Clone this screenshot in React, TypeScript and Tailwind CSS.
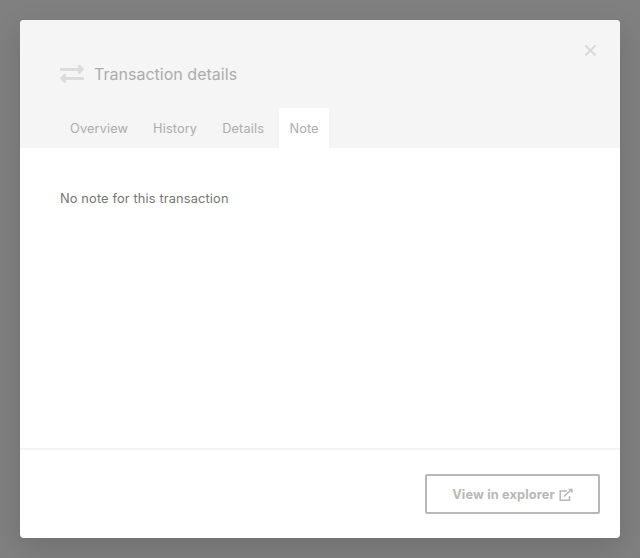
import React from "react";

const tabs = ["Overview", "History", "Details", "Note"];

function TransferIcon() {
  return (
    <svg className="h-6 w-6 shrink-0" viewBox="0 0 24 24" fill="#dcdcdc">
      <path d="M0 6h18V4c0-1.200 1.400-1.700 2.200-.9l3.500 3.600c.4.400.4 1 0 1.400l-3.500 3.600c-.8.800-2.200.300-2.200-.9V9H0z" />
      <path d="M24 15H6v-2c0-1.200-1.400-1.700-2.200-.9L.3 15.700c-.4.400-.4 1 0 1.400l3.500 3.600c.8.800 2.200.300 2.200-.9V18h18z" />
    </svg>
  );
}

export default function App() {
  return (
    <div className="h-[558px] w-[640px] bg-[#808080] p-5 font-['Inter',sans-serif] text-[12.8px] tracking-[0.15px]">
      <div className="flex h-[518px] flex-col overflow-hidden rounded-[4px] bg-white shadow-[0_10px_30px_rgba(0,0,0,0.14)]">
        <header className="flex h-32 shrink-0 flex-col bg-[#f5f5f5] text-[#acacac]">
          <div className="flex h-[88px]">
            <h1 className="flex flex-1 items-center gap-[10px] pt-5 pl-10 text-[16px] tracking-[0.02px]">
              <TransferIcon />
              Transaction details
            </h1>
            <button className="mt-6 mr-[23px] h-[13px] w-[13px]" aria-label="Close">
              <svg className="h-[13px] w-[13px]" viewBox="0 0 13 13" stroke="#d8d8d8" strokeWidth="1.8">
                <path d="M1.500 1.500l10 10M11.500 1.500l-10 10" />
              </svg>
            </button>
          </div>
          <nav className="flex h-10 gap-[5px] pl-10 tracking-[0.11px]">
            {tabs.map((tab) => (
              <button key={tab} className={tab === "Note" ? "w-[50px] rounded-t-[2px] bg-white pt-px" : "px-[10px] pt-px"}>
                {tab}
              </button>
            ))}
          </nav>
        </header>
        <main className="flex-1 px-10 pt-[41px] leading-[20px] text-[#757575]">No note for this transaction</main>
        <footer className="flex h-[90px] shrink-0 items-center justify-end border-t-2 border-[#f4f4f4] pr-5">
          <button className="flex h-10 w-[175px] items-center justify-center gap-1 rounded-[2px] border-2 border-[#b8b8b8] pt-px font-bold tracking-[0.12px] text-[#b8b8b8]">
            View in explorer
            <svg className="h-[14px] w-[14px]" viewBox="0 0 14 14" fill="none" stroke="currentColor" strokeWidth="1.5">
              <path d="M8 3H1.200v9.300h9.300V8M5 8.500L11.500 2.200" />
              <path d="M9 .8h4.700v4.700z" fill="currentColor" stroke="none" />
            </svg>
          </button>
        </footer>
      </div>
    </div>
  );
}
